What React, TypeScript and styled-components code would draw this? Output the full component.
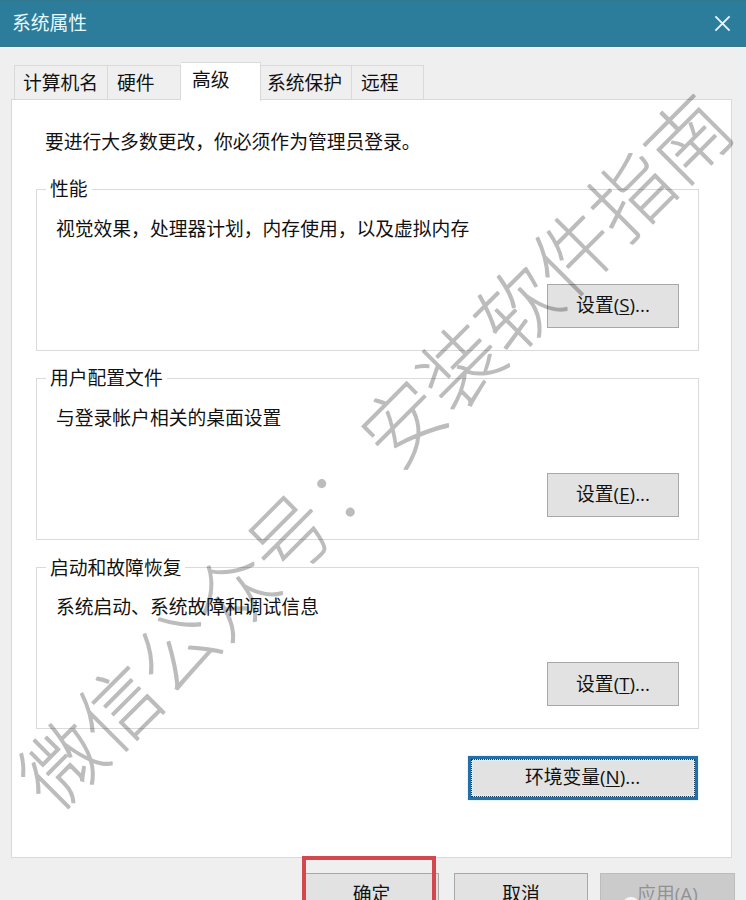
import React from "react";
import styled, { createGlobalStyle, css } from "styled-components";

const GlobalStyle = createGlobalStyle`
  * { box-sizing: border-box; }
  html, body { margin: 0; padding: 0; overflow: hidden; }
`;

const Window = styled.div`
  position: relative;
  display: flex;
  flex-direction: column;
  width: 746px;
  height: 900px;
  overflow: hidden;
  background: linear-gradient(90deg, #efefef 0, #efefef 736px, #eaf1f4 746px);
  color: #111;
  font-family: "Open Sans", "Noto Sans CJK SC", sans-serif;
  font-size: 18.8px;
  line-height: 24px;
  white-space: nowrap;
`;

const TitleBar = styled.header`
  display: flex;
  flex: none;
  justify-content: space-between;
  align-items: center;
  height: 48px;
  padding: 0 15px 2px 12px;
  background: linear-gradient(#32788f 0, #2c7d9c 3px, #2c7d9c 44px, #3b7885 47px, #e6f6fb 47px);
  color: #e9f9ff;
`;

const CloseIcon = styled.svg`
  width: 17px;
  height: 17px;
  fill: none;
  stroke: #e4f8ff;
  stroke-width: 2;
`;

const Tabs = styled.nav`
  display: flex;
  flex: none;
  align-items: flex-end;
  height: 53px;
  margin: 0 0 -2px 14px;
  position: relative;
  z-index: 1;
`;

const Tab = styled.div<{ $width: number; $pad: number; $active?: boolean }>`
  flex: none;
  width: ${(p) => p.$width}px;
  height: 35px;
  margin-bottom: 1px;
  padding: 5px 0 0 ${(p) => p.$pad}px;
  border: 1px solid #d9d9d9;
  border-left-width: 0;
  &:first-child { border-left-width: 1px; }
  ${(p) =>
    p.$active &&
    css`
      height: 39px;
      margin-bottom: 0;
      background: #fff;
      border-bottom: 0;
    `}
`;

const Panel = styled.main`
  flex: none;
  display: flex;
  flex-direction: column;
  width: 721px;
  height: 759px;
  margin-left: 11px;
  padding: 30px 32px 0 24px;
  background: #fff;
  border: 1px solid #d9d9d9;
`;

const Notice = styled.p`
  margin: 0 0 34.6px 9px;
  height: 24px;
`;

const Group = styled.section`
  flex: none;
  display: flex;
  flex-direction: column;
  height: 162px;
  margin-bottom: 27.3px;
  border: 1px solid #dadada;
`;

const Legend = styled.h2`
  align-self: flex-start;
  height: 24px;
  margin: -12.5px 0 0 9px;
  padding: 0 4px;
  background: #fff;
  font-size: inherit;
  font-weight: 400;
`;

const Description = styled.p`
  margin: 15.6px 0 0 19px;
`;

const Button = styled.button<{ $width?: number; $disabled?: boolean }>`
  flex: none;
  width: ${(p) => p.$width ?? 132}px;
  height: 44px;
  padding: 0 0 1px;
  border: 1px solid #a8a8a8;
  border-radius: 0;
  background: #e2e2e2;
  color: #111;
  font: inherit;
  line-height: 24px;
  ${(p) =>
    p.$disabled &&
    css`
      background: #cbcbcb;
      border-color: #bdbdbd;
      color: #929292;
    `}
`;

const GroupButton = styled(Button)`
  align-self: flex-end;
  margin: auto 19px 22px 0;
`;

const FocusedButton = styled(Button)`
  align-self: flex-end;
  margin: 0 1px 0 0;
  padding: 0;
  border: 3px solid #246fa8;
  box-shadow: 0 0 1px #5dc1ef;
`;

const FocusRing = styled.span`
  display: flex;
  align-items: center;
  justify-content: center;
  height: 100%;
  padding: 0 1px 2px 0;
  border: 1px dotted #153957;
  outline: 1px solid #dceefa;
  outline-offset: -2px;
`;

const Key = styled.span`
  text-decoration: underline;
  text-decoration-thickness: 1px;
  text-underline-offset: 2px;
`;

const Footer = styled.footer`
  flex: none;
  display: flex;
  gap: 12px;
  height: 44px;
  margin: 15px 11px 0 304px;
`;

const FooterButton = styled(Button)`
  height: 44px;
  padding-top: 0;
  padding-bottom: 2px;
  &:first-child { margin-right: 3px; }
`;

const Highlight = styled.div`
  position: absolute;
  left: 302px;
  top: 856px;
  width: 134px;
  height: 60px;
  border: 4px solid #d5474e;
`;

const Blob = styled.div`
  position: absolute;
  left: 624px;
  top: 897px;
  width: 14px;
  height: 10px;
  border-radius: 50%;
  background: #f4f4f4;
`;

const Watermark = styled.svg`
  position: absolute;
  inset: 0;
  width: 746px;
  height: 900px;
  pointer-events: none;
  opacity: 0.26;
  text {
    font-family: "Noto Sans CJK SC", sans-serif;
    font-size: 80.4px;
    font-weight: 100;
    fill: #000;
    stroke: #000;
    stroke-width: 1.7px;
    stroke-linejoin: round;
  }
  tspan {
    stroke: none;
  }
`;

const tabs = [
  { label: "计算机名", width: 94, pad: 8 },
  { label: "硬件", width: 73, pad: 9 },
  { label: "高级", width: 80, pad: 11, active: true },
  { label: "系统保护", width: 91, pad: 6 },
  { label: "远程", width: 72, pad: 9 },
];

const groups = [
  { title: "性能", text: "视觉效果，处理器计划，内存使用，以及虚拟内存", key: "S" },
  { title: "用户配置文件", text: "与登录帐户相关的桌面设置", key: "E" },
  { title: "启动和故障恢复", text: "系统启动、系统故障和调试信息", key: "T" },
];

export default function App() {
  return (
    <Window>
      <GlobalStyle />
      <TitleBar>
        <span>系统属性</span>
        <CloseIcon viewBox="0 0 18 18">
          <path d="M1.5 1.5 16.5 16.5M16.5 1.5 1.5 16.5" />
        </CloseIcon>
      </TitleBar>
      <Tabs>
        {tabs.map((t) => (
          <Tab key={t.label} $width={t.width} $pad={t.pad} $active={t.active}>
            {t.label}
          </Tab>
        ))}
      </Tabs>
      <Panel>
        <Notice>要进行大多数更改，你必须作为管理员登录。</Notice>
        {groups.map((g) => (
          <Group key={g.key}>
            <Legend>{g.title}</Legend>
            <Description>{g.text}</Description>
            <GroupButton>
              设置(<Key>{g.key}</Key>)...
            </GroupButton>
          </Group>
        ))}
        <FocusedButton $width={230}>
          <FocusRing>
            环境变量(<Key>N</Key>)...
          </FocusRing>
        </FocusedButton>
      </Panel>
      <Footer>
        <FooterButton $width={135}>确定</FooterButton>
        <FooterButton $width={134}>取消</FooterButton>
        <FooterButton $width={135} $disabled>
          应用(A)
        </FooterButton>
      </Footer>
      <Highlight />
      <Blob />
      <Watermark viewBox="0 0 746 900">
        <text
          transform="translate(375 451.5) rotate(-45)"
          x="0"
          y="30"
          textAnchor="middle"
        >
          微信公众号<tspan>：</tspan>安装软件指南
        </text>
      </Watermark>
    </Window>
  );
}
